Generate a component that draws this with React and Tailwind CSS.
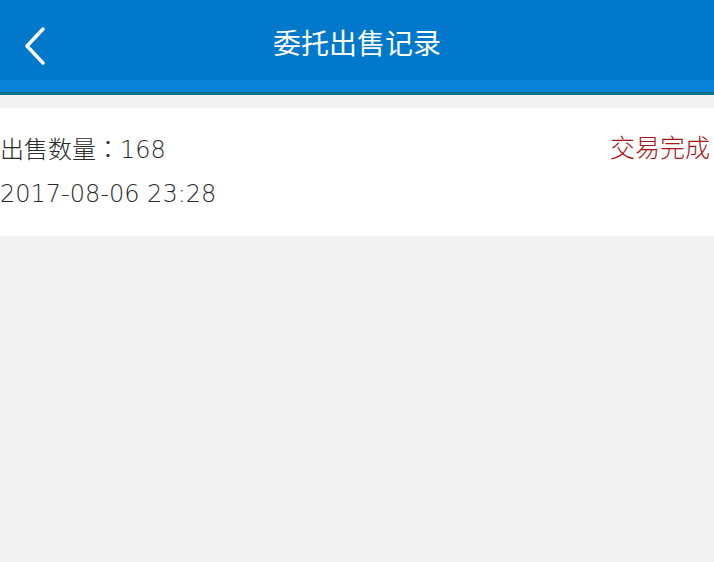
export default function App() {
  return (
    <div className="w-[714px] h-[562px] bg-[#f2f2f2] overflow-hidden" style={{ fontFamily: '"Liberation Sans", "Noto Sans CJK SC", sans-serif' }}>
      <div className="bg-[#0079cd]">
        <div className="h-[80px] flex items-center relative">
          <button className="absolute left-[22px] top-[26px] text-white">
            <svg width="26" height="40" viewBox="0 0 26 40" fill="none" stroke="white" strokeWidth="3.5" strokeLinecap="round" strokeLinejoin="round">
              <path d="M21 3 L5 20 L21 37" />
            </svg>
          </button>
          <div className="flex-1 text-center text-white text-[28px] pt-[10px]">委托出售记录</div>
        </div>
        <div className="h-[12px] bg-[#0782d6]"></div>
        <div className="h-[3px] bg-[#0c6f83]"></div>
      </div>
      <div className="mt-[13px] bg-white h-[128px] pt-[18px] font-['DejaVu_Sans','Noto_Sans_CJK_SC',sans-serif] font-light">
        <div className="flex justify-between items-center">
          <div className="text-[#2a2a2a] text-[24px] leading-[44px]">
            出售数量<span className="font-['Noto_Sans_CJK_TC',sans-serif]">：</span>168
          </div>
          <div className="text-[#a8161a] text-[25px] leading-[44px] pr-[4px]">交易完成</div>
        </div>
        <div className="text-[#2a2a2a] text-[24px] leading-[44px]">2017-08-06 23:28</div>
      </div>
    </div>
  );
}
